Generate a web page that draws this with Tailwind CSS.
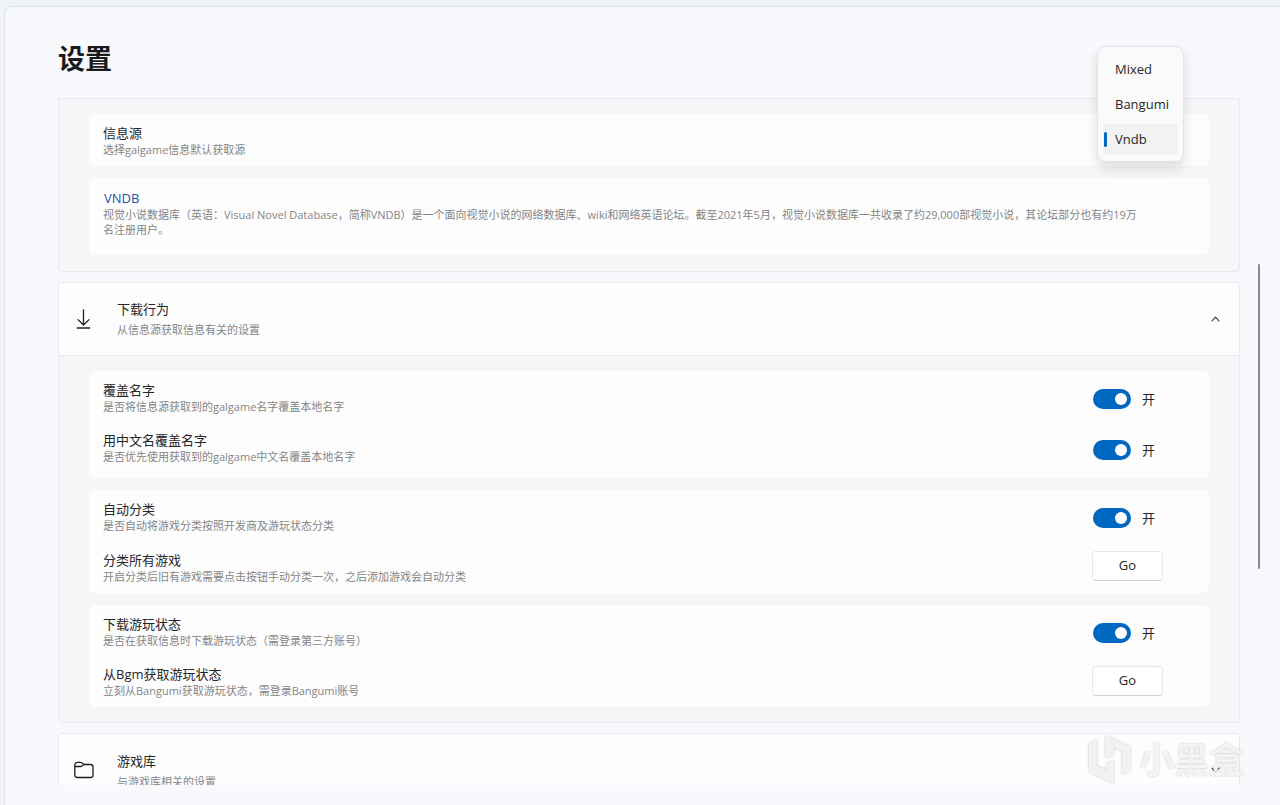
<!DOCTYPE html>
<html lang="zh-CN">
<head>
<meta charset="utf-8">
<meta name="viewport" content="width=device-width, initial-scale=1">
<title>设置</title>
<script src="https://cdn.jsdelivr.net/npm/@tailwindcss/browser@4"></script>
</head>
<body class="h-screen overflow-hidden bg-[#f0f3f8] pt-[6px] pl-1 font-['Open_Sans','Noto_Sans_CJK_SC',sans-serif] text-[13px] text-[#262626]">
<div class="relative flex h-full flex-col rounded-tl-lg border-t border-l border-[#e0e2e7] bg-[#f8f9fd] pr-10 pb-5 pl-[53px]">
  <h1 class="pt-8 pb-[19px] text-[27px] leading-10 font-bold text-[#1a1a1a]">设置</h1>

  <main class="min-h-0 flex-1 overflow-hidden">
    <section class="rounded-b border border-[#e8e9ec] bg-[#f6f6f8] px-[30px] pt-[15px] pb-4">
      <div class="rounded-md bg-[#fdfdfe] px-[14px] pt-[10px] pb-[9px]">
        <h3 class="leading-[18px]">信息源</h3>
        <p class="text-[11px] leading-[15px] text-[#858585]">选择galgame信息默认获取源</p>
      </div>
      <div class="mt-3 rounded-md bg-[#fdfdfe] pt-[11px] pr-12 pb-[18px] pl-[14px]">
        <a href="#vndb" class="block w-fit pl-px leading-[18px] text-[#1a53a5]">VNDB</a>
        <p class="text-[11px] leading-[15px] text-[#858585]">视觉小说数据库（英语：Visual Novel Database，简称VNDB）是一个面向视觉小说的网络数据库、wiki和网络英语论坛。截至2021年5月，视觉小说数据库一共收录了约29,000部视觉小说，其论坛部分也有约19万<br>名注册用户。</p>
      </div>
    </section>

    <section class="mt-[10px] overflow-hidden rounded border border-[#e8e9ec] bg-[#f6f6f8]">
      <button type="button" aria-expanded="true" class="flex h-[73px] w-full items-center border-b border-[#e8e9ec] bg-[#fdfdfe] pr-[19px] pl-4 text-left">
        <svg class="h-5 w-[18px] shrink-0" viewBox="0 0 18 20" fill="none" stroke="#1f1f1f" stroke-width="1.3" stroke-linecap="round" stroke-linejoin="round"><path d="M8.500 .8v15M3 10.600l5.500 5.400 5.500-5.400M2.300 19h12.400"/></svg>
        <span class="ml-6 flex-1 pt-[2px]">
          <span class="block leading-5">下载行为</span>
          <span class="block text-[11px] leading-[22px] text-[#858585]">从信息源获取信息有关的设置</span>
        </span>
        <svg class="h-2 w-[9px] shrink-0" viewBox="0 0 9 8" fill="none" stroke="#333" stroke-width="1.100" stroke-linecap="round" stroke-linejoin="round"><path d="M1 5.800l3.500-3.600L8 5.800"/></svg>
      </button>
      <div class="flex flex-col gap-3 px-[30px] py-[15px]">
        <div class="rounded-md bg-[#fdfdfe] pr-[46px] pl-[14px] py-[3px]">
          <div class="flex h-[50px] items-center">
            <label for="t1" class="flex-1 pb-1"><span class="block leading-[18px]">覆盖名字</span><span class="block text-[11px] leading-[15px] text-[#858585]">是否将信息源获取到的galgame名字覆盖本地名字</span></label>
            <label class="flex w-[70px] items-center gap-[11px]"><input id="t1" type="checkbox" role="switch" checked class="sr-only"><span class="flex h-5 w-[38px] items-center justify-end rounded-full bg-[#0067c0] pr-1"><span class="size-3 rounded-full bg-white"></span></span><span class="pt-[2px]">开</span></label>
          </div>
          <div class="flex h-[51px] items-center">
            <label for="t2" class="flex-1 pb-1"><span class="block leading-[18px]">用中文名覆盖名字</span><span class="block text-[11px] leading-[15px] text-[#858585]">是否优先使用获取到的galgame中文名覆盖本地名字</span></label>
            <label class="flex w-[70px] items-center gap-[11px]"><input id="t2" type="checkbox" role="switch" checked class="sr-only"><span class="flex h-5 w-[38px] items-center justify-end rounded-full bg-[#0067c0] pr-1"><span class="size-3 rounded-full bg-white"></span></span><span class="pt-[2px]">开</span></label>
          </div>
        </div>
        <div class="rounded-md bg-[#fdfdfe] pr-[46px] pl-[14px] pt-[3px]">
          <div class="flex h-[50px] items-center">
            <label for="t3" class="flex-1 pb-1"><span class="block leading-[18px]">自动分类</span><span class="block text-[11px] leading-[15px] text-[#858585]">是否自动将游戏分类按照开发商及游玩状态分类</span></label>
            <label class="flex w-[70px] items-center gap-[11px]"><input id="t3" type="checkbox" role="switch" checked class="sr-only"><span class="flex h-5 w-[38px] items-center justify-end rounded-full bg-[#0067c0] pr-1"><span class="size-3 rounded-full bg-white"></span></span><span class="pt-[2px]">开</span></label>
          </div>
          <div class="flex h-[50px] items-center">
            <div class="flex-1 pb-[2px]"><h3 class="leading-[18px]">分类所有游戏</h3><p class="text-[11px] leading-[15px] text-[#858585]">开启分类后旧有游戏需要点击按钮手动分类一次，之后添加游戏会自动分类</p></div>
            <button type="button" class="mb-1 h-[30px] w-[71px] rounded border border-[#e8e8e8] border-b-[#d0d0d0] bg-white">Go</button>
          </div>
        </div>
        <div class="rounded-md bg-[#fdfdfe] pr-[46px] pl-[14px] pt-[3px]">
          <div class="flex h-[50px] items-center">
            <label for="t4" class="flex-1 pb-1"><span class="block leading-[18px]">下载游玩状态</span><span class="block text-[11px] leading-[15px] text-[#858585]">是否在获取信息时下载游玩状态（需登录第三方账号）</span></label>
            <label class="flex w-[70px] items-center gap-[11px]"><input id="t4" type="checkbox" role="switch" checked class="sr-only"><span class="flex h-5 w-[38px] items-center justify-end rounded-full bg-[#0067c0] pr-1"><span class="size-3 rounded-full bg-white"></span></span><span class="pt-[2px]">开</span></label>
          </div>
          <div class="flex h-[49px] items-center">
            <div class="flex-1 pb-[2px]"><h3 class="leading-[18px]">从Bgm获取游玩状态</h3><p class="text-[11px] leading-[15px] text-[#858585]">立刻从Bangumi获取游玩状态，需登录Bangumi账号</p></div>
            <button type="button" class="mb-1 h-[30px] w-[71px] rounded border border-[#e8e8e8] border-b-[#d0d0d0] bg-white">Go</button>
          </div>
        </div>
      </div>
    </section>

    <section class="mt-[10px] overflow-hidden rounded border border-[#e8e9ec]">
      <button type="button" aria-expanded="false" class="flex h-[72px] w-full items-center bg-[#fdfdfe] pr-[19px] pl-[15px] text-left">
        <svg class="h-[18px] w-5 shrink-0" viewBox="0 0 20 18" fill="none" stroke="#1f1f1f" stroke-width="1.300" stroke-linejoin="round"><path d="M.8 4A2.700 2.700 0 0 1 3.500 1.300h3a2 2 0 0 1 1.300.5l2.200 1.700h6.500A2.500 2.500 0 0 1 19 6v8a2.500 2.500 0 0 1-2.500 2.500h-13A2.700 2.700 0 0 1 .8 13.800zM.8 5.500h5.700a2 2 0 0 0 1.300-.5l2.200-1.500"/></svg>
        <span class="ml-[23px] flex-1 pt-[3px]">
          <span class="block leading-5">游戏库</span>
          <span class="block text-[11px] leading-[22px] text-[#858585]">与游戏库相关的设置</span>
        </span>
        <svg class="h-2 w-[9px] shrink-0" viewBox="0 0 9 8" fill="none" stroke="#333" stroke-width="1.100" stroke-linecap="round" stroke-linejoin="round"><path d="M1 2.200l3.500 3.600L8 2.200"/></svg>
      </button>
    </section>
  </main>

  <!-- Source picker flyout -->
  <div role="listbox" aria-label="信息源" class="absolute top-[39px] right-24 flex w-[87px] flex-col gap-1 rounded-lg border border-[#e2e2e4] bg-[#fafafa] px-[5px] pt-[7px] pb-[6px] shadow-[0_6px_12px_rgba(0,0,0,0.13)]">
    <button type="button" role="option" aria-selected="false" class="h-[31px] rounded pl-3 text-left">Mixed</button>
    <button type="button" role="option" aria-selected="false" class="h-[31px] rounded pl-3 text-left">Bangumi</button>
    <button type="button" role="option" aria-selected="true" class="flex h-[31px] items-center gap-2 rounded bg-[#f2f2f2] pl-px text-left"><span class="h-[15px] w-[3px] rounded-full bg-[#0067c0]"></span>Vndb</button>
  </div>

  <!-- Scroll thumb -->
  <div class="absolute top-[257px] right-5 h-[305px] w-[2px] rounded-full bg-[#8a8a8a]"></div>

  <!-- Site mark -->
  <div class="pointer-events-none absolute right-9 bottom-[19px] flex items-center gap-2 text-white/80">
    <svg class="h-[52px] w-11 drop-shadow-[0_0_1px_rgba(0,0,0,0.35)]" viewBox="0 0 45 52" fill="currentColor"><path d="M2 10l8-5v27l10 5v-7l7-3v23L2 38zM19 1l25 12v24l-8 4V17l-9-4v8l-8 3z"/></svg>
    <span class="text-[35px] leading-[52px] font-bold [text-shadow:0_0_2px_rgba(0,0,0,0.25)]">小黑盒</span>
  </div>
</div>
</body>
</html>
